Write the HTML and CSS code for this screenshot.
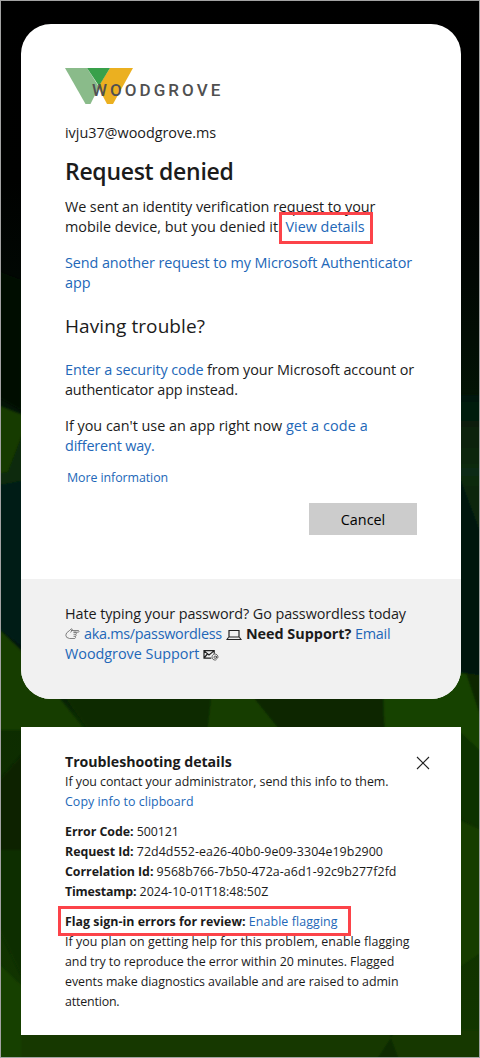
FILE: index.html
```html
<!DOCTYPE html>
<html lang="en">
<head>
<meta charset="utf-8">
<title>Request denied</title>
<link rel="stylesheet" href="styles.css">
</head>
<body>
<div class="page">
  <svg class="backdrop" width="480" height="1058" viewBox="0 0 480 1058" aria-hidden="true">
    <defs>
      <linearGradient id="night" x1="0" y1="0" x2="0" y2="1">
        <stop offset="0" stop-color="#000"/><stop offset=".17" stop-color="#000100"/>
        <stop offset=".26" stop-color="#010703"/><stop offset=".38" stop-color="#031405"/>
        <stop offset=".5" stop-color="#04191a"/><stop offset=".63" stop-color="#02140d"/>
        <stop offset=".68" stop-color="#0d2c00"/><stop offset="1" stop-color="#123600"/>
      </linearGradient>
      <linearGradient id="leaf" x1="0" y1="0" x2="0" y2="1">
        <stop offset="0" stop-color="#051807"/><stop offset=".5" stop-color="#0a2a12"/><stop offset="1" stop-color="#08240f"/>
      </linearGradient>
      <filter id="soft"><feGaussianBlur stdDeviation="1.2"/></filter>
    </defs>
    <rect width="480" height="1058" fill="url(#night)"/>
    <g filter="url(#soft)">
      <path d="M-5 270L21 280V410L-5 395Z" fill="#031002"/>
      <path d="M-5 404L26 416V425L8 472L-5 474Z" fill="#173b00"/>
      <path d="M-5 474L8 472L26 425V480L-5 488Z" fill="#082a08"/>
      <path d="M-5 486L26 480V650L-5 625Z" fill="#041b18"/>
      <path d="M-5 625L21 650L85 730H-5Z" fill="#173c00"/>
      <path d="M60 690H212L208 735H92Z" fill="#0d2b00"/>
      <path d="M212 690H248L284 735H207Z" fill="#153c00"/>
      <path d="M248 690H383L386 735H284Z" fill="#0b2500"/>
      <path d="M455 395H485V545L455 465Z" fill="url(#leaf)"/>
      <path d="M455 465L485 545V677L455 673Z" fill="#03150f"/>
      <path d="M383 690H440L461 673L485 676V760H386Z" fill="#174200"/>
      <path d="M466 673L485 677V730Z" fill="#0b2502"/>
      <path d="M455 727L485 755V832L455 815Z" fill="#0f3000"/>
      <path d="M455 818L485 832V950L455 970Z" fill="#153d00"/>
      <path d="M-5 785L26 750V850H-5Z" fill="#0b2400"/>
      <path d="M-5 850H26V985L-5 920Z" fill="#0e2d00"/>
      <path d="M-5 960L26 990V1065H-5Z" fill="#174000"/>
      <path d="M21 1030H485V1065H21Z" fill="#153900"/>
      <path d="M388 1030H396L375 1062H400Z" fill="#0d2b00"/>
    </g>
  </svg>
  <main class="card">
    <section class="card-body">
      <svg class="logo" width="170" height="38" viewBox="0 0 170 38" role="img" aria-label="Woodgrove">
        <path d="M0 1H22L34 20L25.5 37H20.5Z" fill="#8abb8a"/>
        <path d="M45 1H68L48 37H42L33 20Z" fill="#ebb020"/>
        <path d="M22 1H45L34 19Z" fill="#38a04a"/>
        <text class="logo-text" x="27" y="29">WOODGROVE</text>
      </svg>
      <p class="email">ivju37@woodgrove.ms</p>
      <h1>Request denied</h1>
      <p class="para"><span class="line snug">We sent an identity verification request to your</span><span class="line">mobile device, but you denied it. <a class="marked" href="#details">View details</a></span></p>
      <p class="para"><a class="line snug" href="#">Send another request to my Microsoft Authenticator</a><a class="line" href="#">app</a></p>
      <h2>Having trouble?</h2>
      <p class="para"><span class="line snug"><a href="#">Enter a security code</a> from your Microsoft account or</span><span class="line tight">authenticator app instead.</span></p>
      <p class="para"><span class="line">If you can't use an app right now <a class="wide" href="#">get a code a</a></span><a class="line tight" href="#">different way.</a></p>
      <p class="more"><a href="#">More information</a></p>
      <div class="actions"><button class="cancel" type="button">Cancel</button></div>
    </section>
    <footer class="card-foot">
      <span class="line snug">Hate typing your password? Go passwordless today</span>
      <span class="line"><svg class="glyph hand" width="15" height="13" viewBox="0 0 15 13" aria-hidden="true"><path d="M6 2.5H13.5Q14.5 3.3 13.5 4.2H8.5M8.5 4.2H11Q12 5.5 10.8 6.3H8.5M10.8 6.3Q11.6 7.6 10.5 8.3H8.5M10.4 8.3Q11 9.7 9.8 10.5H4.5Q.8 10 .8 7.2Q.8 4.8 4.2 2.8L6.3.8Q7.7.6 7 2.4L5.6 4.5" fill="none" stroke="#666" stroke-width=".8"/></svg><a class="tighter" href="#">aka.ms/passwordless</a><svg class="glyph laptop" width="16" height="12" viewBox="0 0 16 12" aria-hidden="true"><path d="M3 1.5H13V8H3Z" fill="none" stroke="#222" stroke-width="1.2"/><path d="M2.6 8.3L1 10.5H15L13.4 8.3" fill="none" stroke="#222" stroke-width="1.1"/></svg><b>Need Support?</b> <a class="tighter" href="#">Email</a></span>
      <span class="line"><a href="#">Woodgrove Support</a><svg class="glyph mail" width="16" height="12" viewBox="0 0 16 12" aria-hidden="true"><path d="M8.3 9.2H1V1.7H11.2V4.7M1 1.9L6 6L11 1.9M1 9L4.4 5" fill="none" stroke="#222" stroke-width="1.2"/><path d="M13.6 10.6A3 3 0 1 1 15 8.2Q14.8 9.6 13.6 9.2L13.4 7" fill="none" stroke="#444" stroke-width=".8"/><circle cx="12.2" cy="8.2" r="1.2" fill="none" stroke="#444" stroke-width=".8"/></svg></span>
    </footer>
  </main>
  <section class="details" id="details">
    <svg class="close" width="14" height="14" viewBox="0 0 14 14" role="img" aria-label="Close"><path d="M1 1L13 13M13 1L1 13" stroke="#222" stroke-width="1.1"/></svg>
    <h3>Troubleshooting details</h3>
    <p><span class="line">If you contact your administrator, send this info to them.</span><a class="line loose" href="#">Copy info to clipboard</a></p>
    <div class="group">
      <span class="line"><b>Error Code:</b> 500121</span>
      <span class="line"><b>Request Id:</b> <span class="loose">72d4d552-ea26-40b0-9e09-3304e19b2900</span></span>
      <span class="line"><b>Correlation Id:</b> <span class="loose">9568b766-7b50-472a-a6d1-92c9b277f2fd</span></span>
      <span class="line"><b class="tight">Timestamp:</b> <span class="loose">2024-10-01T18:48:50Z</span></span>
    </div>
    <div class="group">
      <span class="line flag"><b>Flag sign-in errors for review:</b> <a class="wide" href="#">Enable flagging</a></span>
      <span class="line loose">If you plan on getting help for this problem, enable flagging</span>
      <span class="line">and try to reproduce the error within 20 minutes. Flagged</span>
      <span class="line">events make diagnostics available and are raised to admin</span>
      <span class="line tight">attention.</span>
    </div>
  </section>
</div>
</body>
</html>
```
FILE: styles.css
```css
body{margin:0}
.page{position:relative;box-sizing:border-box;width:480px;height:1058px;border:1px solid #a3a3a3;padding:23px 18px 22px 20px;overflow:hidden;font-family:"Open Sans","Noto Sans",sans-serif;color:#1b1b1b;font-size:14.4px;line-height:20px;letter-spacing:-.02px}
.backdrop{position:absolute;left:-1px;top:-1px}
h1,h2,h3,p{margin:0}
a{color:#2267b8;text-decoration:none}
.line{display:block;white-space:nowrap}
.snug{letter-spacing:-.08px}
.tight{letter-spacing:-.17px}
.tighter{letter-spacing:-.28px}
.loose{letter-spacing:.06px}
.wide{letter-spacing:.1px}
.card{position:relative;height:675px;border-radius:30px;overflow:hidden;background:#fff}
.card-body{box-sizing:border-box;height:555px;padding:43px 44px 0}
.logo{display:block}
.logo-text{font:500 17px Roboto,sans-serif;letter-spacing:3.05px;fill:#505050}
.email{margin-top:18px}
h1{font-size:23px;font-weight:600;line-height:28px;margin-top:14px;letter-spacing:-.29px}
.para{margin-top:16px}
h1+.para{margin-top:12px}
h2{font-size:19px;font-weight:400;line-height:28px;margin-top:19px;letter-spacing:.09px}
h2+.para{margin-top:20px}
.more{font-size:12.4px;margin:12px 0 0 2px;letter-spacing:-.07px}
.actions{display:flex;justify-content:flex-end;margin-top:15px}
.cancel{width:108px;height:32px;padding:1px 0 0;border:0;background:#ccc;font:inherit;color:#000;line-height:31px}
.card-foot{box-sizing:border-box;height:120px;background:#f1f1f1;padding:25px 44px}
.glyph{vertical-align:-2px}
.hand{margin-right:4px}
.laptop{margin:0 4px 0 4px}
.mail{margin-left:4px}
.marked,.flag{position:relative}
.marked::after,.flag::after{content:"";position:absolute;box-sizing:border-box;border:3px solid #fc4349}
.marked::after{left:-7px;top:-5px;width:94px;height:32px}
.flag::after{left:-7px;top:-6px;width:293px;height:30px}
.flag b{letter-spacing:.01px}
.details{position:relative;box-sizing:border-box;height:308px;margin-top:28px;background:#fff;padding:25px 44px;font-size:12.4px;letter-spacing:-.045px}
.close{position:absolute;right:31px;top:29px}
h3{font-size:14.2px}
.group{margin-top:10px}
```
